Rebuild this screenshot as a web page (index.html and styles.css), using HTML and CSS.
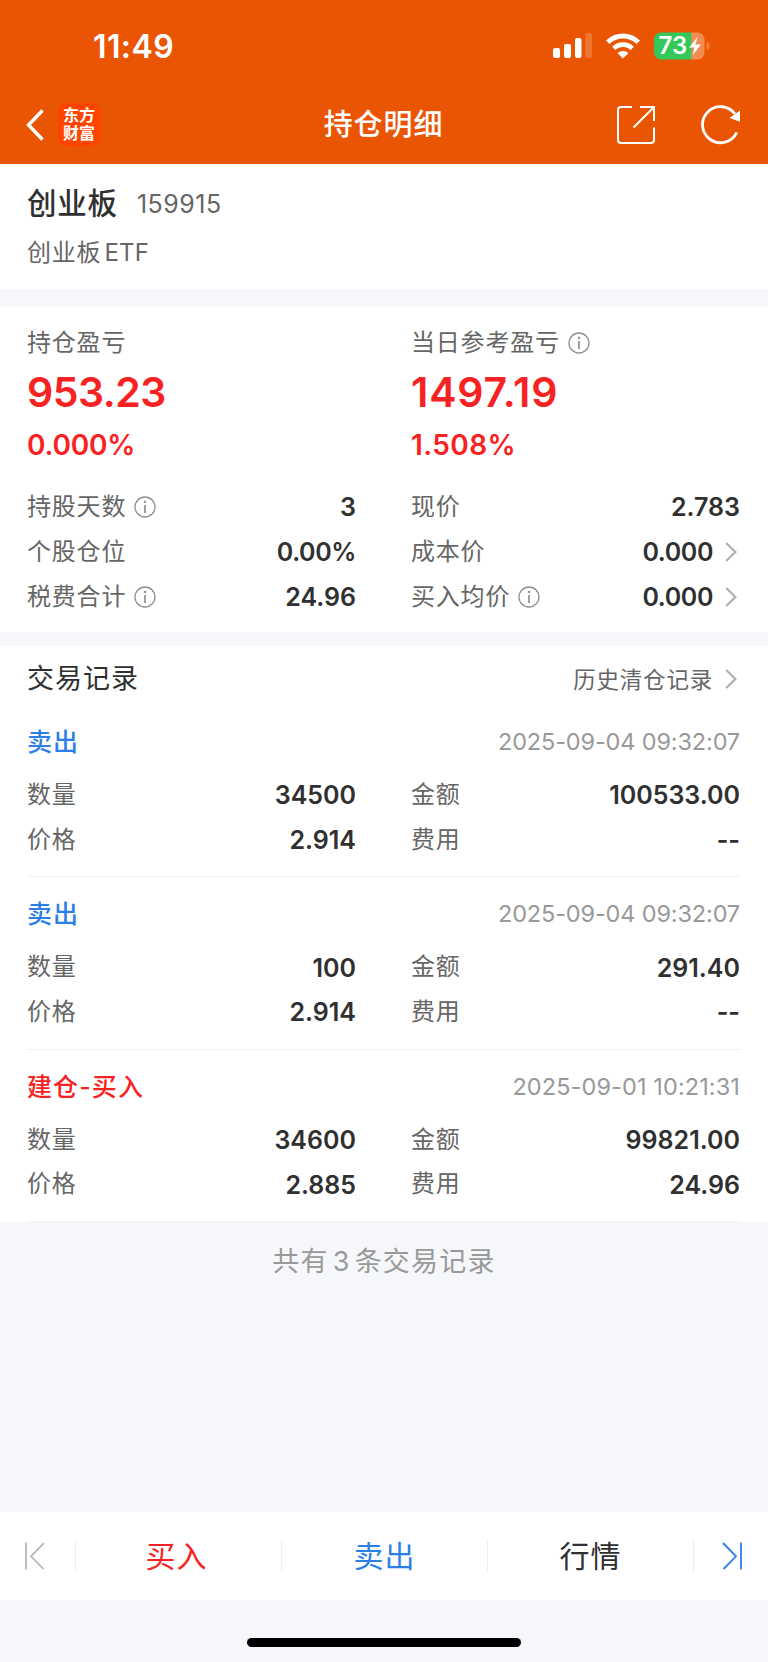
FILE: index.html
```html
<!DOCTYPE html>
<html lang="zh-CN">
<head>
    <meta charset="UTF-8">
    <meta name="viewport" content="width=device-width, initial-scale=1.0">
    <title>持仓明细</title>
    <link rel="stylesheet" href="styles.css">
</head>
<body>
    <svg width="0" height="0" class="symbols">
        <symbol id="info" viewBox="0 0 22 22">
            <circle cx="11" cy="11" r="10" fill="none" stroke="#8e8e8e" stroke-width="1.3"/>
            <circle cx="11" cy="5.9" r="1.2" fill="#8e8e8e"/>
            <path d="M11 9v8" stroke="#8e8e8e" stroke-width="1.7" fill="none"/>
        </symbol>
        <symbol id="arrow" viewBox="0 0 12 20">
            <path d="M1.2 1l9.2 9-9.2 9" fill="none" stroke="#b0b0b0" stroke-width="2.3"/>
        </symbol>
    </svg>

    <header class="header">
        <div class="status-bar">
            <div class="time">11:49</div>
            <div class="status-icons">
                <svg class="signal" width="40" height="26" viewBox="0 0 40 26" fill="#fff">
                    <rect x="0" y="15" width="7" height="10" rx="2"/>
                    <rect x="11" y="11" width="7" height="14" rx="2"/>
                    <rect x="22" y="5" width="6.5" height="20" rx="2"/>
                    <rect x="32.3" y="0" width="6.7" height="25" rx="2" opacity="0.2"/>
                </svg>
                <svg class="wifi" width="34" height="26" viewBox="0 0 34 26">
                    <path d="M1.7 9.3a21.8 21.8 0 0 1 30.6 0" fill="none" stroke="#fff" stroke-width="5"/>
                    <path d="M7.7 15.4a13.3 13.3 0 0 1 18.6 0" fill="none" stroke="#fff" stroke-width="4.6"/>
                    <path d="M17 25.5l-5.5-5.4a8 8 0 0 1 11 0z" fill="#fff"/>
                </svg>
                <svg class="battery" width="57" height="28" viewBox="0 0 57 28">
                    <path d="M37 0.5h6.500a7 7 0 0 1 7 7v13a7 7 0 0 1-7 7H37z" fill="#f58b50"/>
                    <path d="M7 .5h30.500v27H7a7 7 0 0 1-7-7v-13a7 7 0 0 1 7-7z" fill="#34c759"/>
                    <path d="M52.500 9.500c4.300 1.200 4.300 7.800 0 9z" fill="#f27c3d"/>
                    <text x="4.500" y="22.200" class="battery-text">73</text>
                    <path d="M43.500 5L35 15.500h5.300L38.500 23.500 47 12.500h-5.500z" fill="#fff"/>
                </svg>
            </div>
        </div>
        <nav class="nav">
            <div class="nav-left">
                <svg width="18" height="32" viewBox="0 0 18 32"><path d="M16.500 1.500L2.500 16l14 14.500" fill="none" stroke="#fff" stroke-width="3.400"/></svg>
                <div class="logo">东方<br>财富</div>
            </div>
            <h1>持仓明细</h1>
            <div class="nav-right">
                <svg width="38" height="38" viewBox="0 0 38 38" fill="none" stroke="#fff" stroke-width="2">
                    <path d="M15 1H4a3 3 0 0 0-3 3v30a3 3 0 0 0 3 3h30a3 3 0 0 0 3-3V21.500"/>
                    <path d="M23 1h14v14M36.500 1.500L16.500 21.500"/>
                </svg>
                <svg width="40" height="40" viewBox="0 0 40 40">
                    <path d="M35.800 27.400A18 18 0 1 1 34 9" fill="none" stroke="#fff" stroke-width="2.800"/>
                    <path d="M39 5.500v11.200L28.500 13z" fill="#fff"/>
                </svg>
            </div>
        </nav>
    </header>

    <section class="stock">
        <div class="stock-title"><h2>创业板</h2><span class="code">159915</span></div>
        <div class="stock-full">创业板<span class="latin">ETF</span></div>
    </section>

    <section class="summary">
        <div class="col">
            <div class="label">持仓盈亏</div>
            <div class="profit">953.23</div>
            <div class="rate">0.000%</div>
            <div class="row"><span class="label">持股天数<svg class="info"><use href="#info"/></svg></span><b>3</b></div>
            <div class="row"><span class="label">个股仓位</span><b class="tight">0.00%</b></div>
            <div class="row"><span class="label">税费合计<svg class="info"><use href="#info"/></svg></span><b>24.96</b></div>
        </div>
        <div class="col day">
            <div class="label">当日参考盈亏<svg class="info"><use href="#info"/></svg></div>
            <div class="profit">1497.19</div>
            <div class="rate">1.508%</div>
            <div class="row"><span class="label">现价</span><b>2.783</b></div>
            <div class="row"><span class="label">成本价</span><b class="tight">0.000<svg class="arrow"><use href="#arrow"/></svg></b></div>
            <div class="row"><span class="label">买入均价<svg class="info"><use href="#info"/></svg></span><b class="tight">0.000<svg class="arrow"><use href="#arrow"/></svg></b></div>
        </div>
    </section>

    <section class="records">
        <div class="records-head">
            <h3>交易记录</h3>
            <a class="history">历史清仓记录<svg class="arrow"><use href="#arrow"/></svg></a>
        </div>

        <div class="record">
            <div class="record-head"><span class="sell">卖出</span><time>2025-09-04 09:32:07</time></div>
            <div class="record-grid">
                <div class="row"><span class="label">数量</span><b>34500</b></div>
                <div class="row"><span class="label">金额</span><b>100533.00</b></div>
                <div class="row"><span class="label">价格</span><b>2.914</b></div>
                <div class="row"><span class="label">费用</span><b>--</b></div>
            </div>
        </div>

        <div class="record">
            <div class="record-head"><span class="sell">卖出</span><time>2025-09-04 09:32:07</time></div>
            <div class="record-grid">
                <div class="row"><span class="label">数量</span><b>100</b></div>
                <div class="row"><span class="label">金额</span><b>291.40</b></div>
                <div class="row"><span class="label">价格</span><b>2.914</b></div>
                <div class="row"><span class="label">费用</span><b>--</b></div>
            </div>
        </div>

        <div class="record">
            <div class="record-head"><span class="buy">建仓-买入</span><time class="wide">2025-09-01 10:21:31</time></div>
            <div class="record-grid">
                <div class="row"><span class="label">数量</span><b>34600</b></div>
                <div class="row"><span class="label">金额</span><b>99821.00</b></div>
                <div class="row"><span class="label">价格</span><b>2.885</b></div>
                <div class="row"><span class="label">费用</span><b>24.96</b></div>
            </div>
        </div>
    </section>

    <p class="total">共有<span>3</span>条交易记录</p>

    <footer class="toolbar">
        <a class="step"><svg width="20" height="28" viewBox="0 0 20 28" fill="none" stroke="#b3b3b3" stroke-width="1.700"><path d="M1 .5v27M19 1L6 14.300 18.500 27"/></svg></a>
        <a class="tool buy-btn">买入</a>
        <a class="tool sell-btn">卖出</a>
        <a class="tool">行情</a>
        <a class="step next"><svg width="20" height="28" viewBox="0 0 20 28" fill="none" stroke="#2d7fe8" stroke-width="1.800"><path d="M19 .5v27M1 1l13 13.300L1.500 27"/></svg></a>
    </footer>
    <div class="home-bar"></div>
</body>
</html>
```
FILE: styles.css
```css
* {
    box-sizing: border-box;
}
body {
    margin: 0;
    height: 1662px;
    display: flex;
    flex-direction: column;
    background: #f6f7fa;
    color: #303030;
    font-family: Inter, "Noto Sans CJK SC", sans-serif;
    font-size: 24px;
    line-height: 1.2;
}
h1, h2, h3, p {
    margin: 0;
    font-weight: 400;
}
svg {
    display: block;
    flex: none;
}
.symbols {
    position: absolute;
}

/* header */
.header {
    height: 163.500px;
    background: #ea5504;
    color: #fff;
}
.status-bar {
    height: 87px;
    padding: 5px 57px 0 93px;
    display: flex;
    justify-content: space-between;
    align-items: center;
}
.time {
    padding-top: 1px;
    font-size: 32px;
    font-weight: 600;
    line-height: 40px;
    letter-spacing: 0.400px;
}
.status-icons {
    display: flex;
    align-items: center;
}
.signal {
    margin-right: 13px;
}
.wifi {
    margin-right: 14px;
}
.battery-text {
    fill: #fff;
    font-size: 24px;
    font-weight: 600;
}
.nav {
    height: 75px;
    padding: 0 27px 0 26px;
    display: grid;
    grid-template-columns: 1fr auto 1fr;
    align-items: center;
}
.nav-left, .nav-right {
    display: flex;
    align-items: center;
}
.nav-left {
    gap: 14px;
}
.nav-right {
    gap: 46px;
    justify-content: flex-end;
}
.logo {
    width: 42px;
    height: 43px;
    padding-top: 3px;
    border-radius: 9px;
    background: #ff4400;
    font-size: 16px;
    font-weight: 700;
    line-height: 18px;
    text-align: center;
}
h1 {
    padding-top: 2px;
    font-size: 29px;
    font-weight: 500;
    letter-spacing: 0.900px;
}

/* stock name */
.stock {
    height: 125.500px;
    padding: 20px 27px 0;
    background: #fff;
}
.stock-title {
    display: flex;
    align-items: center;
    height: 40px;
}
h2 {
    font-size: 29.500px;
    font-weight: 500;
    letter-spacing: 0.800px;
}
.code {
    margin-left: 19px;
    font-size: 25px;
    letter-spacing: 0.500px;
    color: #666;
}
.stock-full {
    margin-top: 12px;
    line-height: 34px;
    letter-spacing: 0.800px;
    color: #666;
}
.latin {
    margin-left: 3px;
    letter-spacing: 0.200px;
}

/* profit summary */
.summary {
    height: 325px;
    margin-top: 18px;
    padding: 19px 28px 0 27px;
    display: grid;
    grid-template-columns: 1fr 1fr;
    column-gap: 55px;
    background: #fff;
}
.label {
    display: flex;
    align-items: center;
    height: 34px;
    font-size: 24px;
    letter-spacing: 0.800px;
    color: #666;
}
.info {
    width: 22px;
    height: 22px;
    margin-left: 8px;
}
.profit {
    line-height: 50px;
    margin-top: 7px;
    font-size: 41px;
    font-weight: 600;
    letter-spacing: -0.500px;
    color: #f82222;
}
.rate {
    line-height: 36px;
    margin: 10px 0 22px;
    font-size: 28px;
    font-weight: 600;
    letter-spacing: -0.200px;
    color: #f82222;
}
.day .profit {
    letter-spacing: 0.800px;
}
.day .rate {
    letter-spacing: 0.400px;
}
.row {
    height: 44.800px;
    display: flex;
    align-items: center;
    justify-content: space-between;
}
.row b {
    display: flex;
    align-items: center;
    font-size: 25px;
    font-weight: 600;
}
.row .tight {
    letter-spacing: -0.400px;
}
.arrow {
    width: 12px;
    height: 20px;
    margin: 0 3px 0 12px;
}

/* trade records */
.records {
    margin-top: 14px;
    background: #fff;
}
.records-head {
    height: 59px;
    padding: 7px 28px 0 27px;
    display: flex;
    align-items: center;
    justify-content: space-between;
}
h3 {
    font-size: 27px;
    letter-spacing: 1px;
}
.history {
    display: flex;
    align-items: center;
    font-size: 22.500px;
    letter-spacing: 0.800px;
    color: #666;
}
.record {
    height: 172.300px;
    margin: 0 27px;
    padding: 18px 1px 0 0;
    border-bottom: 1px solid #f1f1f3;
}
.record-head {
    height: 38px;
    display: flex;
    align-items: center;
    justify-content: space-between;
}
.sell, .buy {
    font-size: 25px;
    font-weight: 500;
    letter-spacing: 1.100px;
}
.sell {
    color: #2d7fe8;
}
.buy {
    color: #f82222;
}
time {
    font-size: 23.500px;
    letter-spacing: -0.150px;
    color: #999;
}
time.wide {
    letter-spacing: 0.100px;
}
.record-grid {
    margin-top: 12px;
    display: grid;
    grid-template-columns: 1fr 1fr;
    column-gap: 55px;
}
.total {
    margin-top: 20px;
    line-height: 40px;
    font-size: 27px;
    letter-spacing: 1.200px;
    text-align: center;
    color: #999;
}
.total span {
    margin: 0 4px;
}

/* bottom toolbar */
.toolbar {
    height: 88px;
    margin-top: auto;
    display: flex;
    align-items: center;
    background: #fff;
}
.step {
    width: 75px;
    padding-left: 25px;
}
.step.next {
    width: 74px;
    padding-left: 28px;
}
.tool {
    flex: 1;
    line-height: 30px;
    border-left: 1px solid #ececec;
    font-size: 30px;
    letter-spacing: 1px;
    text-align: center;
}
.tool:nth-child(4) {
    border-right: 1px solid #ececec;
}
.buy-btn {
    text-indent: -4px;
    color: #f82222;
}
.sell-btn {
    color: #2d7fe8;
}
.home-bar {
    width: 274px;
    height: 9px;
    margin: 38px auto 15px;
    border-radius: 5px;
    background: #000;
}
```
